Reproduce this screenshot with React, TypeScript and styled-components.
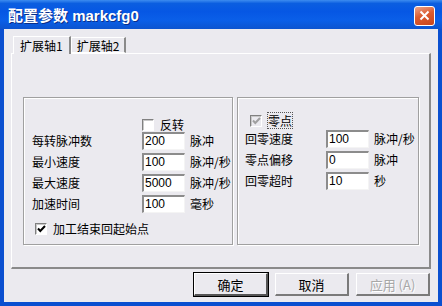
import React from 'react';
import styled, { createGlobalStyle } from 'styled-components';

const GlobalStyle = createGlobalStyle`
  html, body { margin: 0; padding: 0; background: #fff; }
  body { font-family: "Liberation Sans", "Noto Sans CJK SC", sans-serif; font-size: 12px; }
`;

const Window = styled.div`
  width: 442px;
  height: 306px;
  display: flex;
  flex-direction: column;
  background: #0a4fd0;
  box-sizing: border-box;
  overflow: hidden;
`;

const TitleBar = styled.div`
  height: 29px;
  flex: none;
  display: flex;
  align-items: center;
  justify-content: space-between;
  padding: 0 7px 0 8px;
  background: linear-gradient(180deg, #3d8cf0 0%, #0b5ee0 12%, #0657e4 40%, #0a5fe8 70%, #0c54cf 100%);
  box-sizing: border-box;
`;

const Title = styled.div`
  color: #fff;
  font-family: "Liberation Sans", "Noto Sans CJK SC", sans-serif;
  font-weight: bold;
  font-size: 15px;
  text-shadow: 1px 1px 0 #0a2f8a;
`;

const CloseButton = styled.div`
  width: 21px;
  height: 20px;
  border-radius: 3px;
  border: 1px solid #fff;
  box-sizing: border-box;
  background: linear-gradient(160deg, #eca58c 0%, #dc5c30 45%, #c8441c 100%);
  display: flex;
  align-items: center;
  justify-content: center;
  margin-top: 2px;
`;

const Body = styled.div`
  flex: 1;
  margin: 0 4px 4px 4px;
  background: #ebeaef;
  display: flex;
  flex-direction: column;
  padding: 6px 7px 6px 7px;
`;

const TabStrip = styled.div`
  display: flex;
  align-items: flex-end;
  height: 18px;
  padding-left: 2px;
  position: relative;
  z-index: 1;
`;

const Tab = styled.div<{ $active?: boolean }>`
  height: ${p => (p.$active ? '18px' : '16px')};
  box-sizing: border-box;
  padding: ${p => (p.$active ? '1px 6px 0 6px' : '0 5px')};
  border-top: 1px solid #fff;
  border-left: 1px solid #fff;
  border-right: 2px solid #8a8a8a;
  background: #ebeaef;
  font-family: "Noto Sans CJK SC", sans-serif;
  font-size: 12px;
  line-height: 15px;
  color: #000;
  ${p => (p.$active ? 'margin-bottom: -1px;' : 'border-bottom: 1px solid #fff;')}
`;

const Panel = styled.div`
  height: 216px;
  box-sizing: border-box;
  border-top: 1px solid #fff;
  border-left: 1px solid #fff;
  border-right: 2px solid #8a8a8a;
  border-bottom: 2px solid #8a8a8a;
  padding: 43px 10px 0 11px;
  display: flex;
  gap: 4px;
`;

const Group = styled.div<{ $w: number }>`
  width: ${p => p.$w}px;
  height: 148px;
  box-sizing: border-box;
  border: 1px solid #a0a0a0;
  box-shadow: inset 1px 1px 0 #fff, 1px 1px 0 #fff;
  position: relative;
`;

const Rows = styled.div<{ $top: number; $left: number; $label: number }>`
  position: absolute;
  top: ${p => p.$top}px;
  left: ${p => p.$left}px;
  display: grid;
  grid-template-columns: ${p => p.$label}px 43px auto;
  column-gap: 5px;
  row-gap: 3px;
  align-items: center;
`;

const Label = styled.div`
  font-family: "Noto Sans CJK SC", sans-serif;
  font-size: 12px;
  color: #000;
  line-height: 18px;
  white-space: nowrap;
`;

const Field = styled.div`
  height: 18px;
  box-sizing: border-box;
  background: #fff;
  border-top: 2px solid #8c8c8c;
  border-left: 2px solid #8c8c8c;
  border-bottom: 1px solid #f4f4f4;
  border-right: 1px solid #f4f4f4;
  font-family: "Liberation Sans", sans-serif;
  font-size: 12px;
  line-height: 15px;
  padding-left: 1px;
  color: #000;
`;

const CheckRow = styled.div`
  display: flex;
  align-items: center;
  gap: 6px;
  font-family: "Noto Sans CJK SC", sans-serif;
  font-size: 12px;
  color: #000;
`;

const Box = styled.div<{ $disabled?: boolean }>`
  width: 12px;
  height: 12px;
  box-sizing: border-box;
  background: ${p => (p.$disabled ? '#ebeaef' : '#fff')};
  border-top: 1px solid #808080;
  border-left: 1px solid #808080;
  border-bottom: 1px solid #fff;
  border-right: 1px solid #fff;
  box-shadow: inset 1px 1px 0 #c8c8c8;
  display: flex;
  align-items: center;
  justify-content: center;
`;

const Focus = styled.span`
  outline: 1px dotted #555;
  line-height: 15px;
`;

const Spot = styled.div<{ $top: number; $left: number }>`
  position: absolute;
  top: ${p => p.$top}px;
  left: ${p => p.$left}px;
`;

const Footer = styled.div`
  display: flex;
  justify-content: flex-end;
  gap: 7px;
  margin-top: 4px;
  padding-right: 1px;
`;

const Button = styled.div<{ $default?: boolean; $disabled?: boolean }>`
  width: 74px;
  height: 23px;
  box-sizing: border-box;
  background: #ebeaef;
  border-top: 1px solid #fff;
  border-left: 1px solid #fff;
  border-right: 2px solid #7a7a7a;
  border-bottom: 2px solid #7a7a7a;
  ${p => (p.$default ? 'box-shadow: 0 0 0 1px #000; border-right-color: #555; border-bottom-color: #555;' : '')}
  display: flex;
  align-items: center;
  justify-content: center;
  font-family: "Noto Sans CJK SC", sans-serif;
  font-size: 13px;
  color: ${p => (p.$disabled ? '#a8a8a8' : '#000')};
  text-shadow: ${p => (p.$disabled ? '1px 1px 0 #fff' : 'none')};
`;

const Check = ({ color = '#000' }: { color?: string }) => (
  <svg width="9" height="8" viewBox="0 0 9 8">
    <path d="M1 3.5 L3.3 6 L8 1" stroke={color} strokeWidth="2" fill="none" />
  </svg>
);

const leftRows = [
  ['每转脉冲数', '200', '脉冲'],
  ['最小速度', '100', '脉冲/秒'],
  ['最大速度', '5000', '脉冲/秒'],
  ['加速时间', '100', '毫秒'],
];

const rightRows = [
  ['回零速度', '100', '脉冲/秒'],
  ['零点偏移', '0', '脉冲'],
  ['回零超时', '10', '秒'],
];

const renderRows = (rows: string[][]) =>
  rows.map(([label, value, unit]) => (
    <React.Fragment key={label}>
      <Label>{label}</Label>
      <Field>{value}</Field>
      <Label>{unit}</Label>
    </React.Fragment>
  ));

export default function App() {
  return (
    <Window>
      <GlobalStyle />
      <TitleBar>
        <Title>配置参数 markcfg0</Title>
        <CloseButton>
          <svg width="11" height="11" viewBox="0 0 11 11">
            <path d="M1.5 1.5 L9.5 9.5 M9.5 1.5 L1.5 9.5" stroke="#fff" strokeWidth="2" />
          </svg>
        </CloseButton>
      </TitleBar>
      <Body>
        <TabStrip>
          <Tab $active>扩展轴1</Tab>
          <Tab>扩展轴2</Tab>
        </TabStrip>
        <Panel>
          <Group $w={210}>
            <Spot $top={18} $left={118}>
              <CheckRow>
                <Box />
                反转
              </CheckRow>
            </Spot>
            <Rows $top={34} $left={8} $label={105}>
              {renderRows(leftRows)}
            </Rows>
            <Spot $top={122} $left={11}>
              <CheckRow>
                <Box><Check /></Box>
                加工结束回起始点
              </CheckRow>
            </Spot>
          </Group>
          <Group $w={182}>
            <Spot $top={15} $left={12}>
              <CheckRow>
                <Box $disabled><Check color="#a0a0a0" /></Box>
                <Focus>零点</Focus>
              </CheckRow>
            </Spot>
            <Rows $top={32} $left={7} $label={76}>
              {renderRows(rightRows)}
            </Rows>
          </Group>
        </Panel>
        <Footer>
          <Button $default>确定</Button>
          <Button>取消</Button>
          <Button $disabled>应用 (A)</Button>
        </Footer>
      </Body>
    </Window>
  );
}
